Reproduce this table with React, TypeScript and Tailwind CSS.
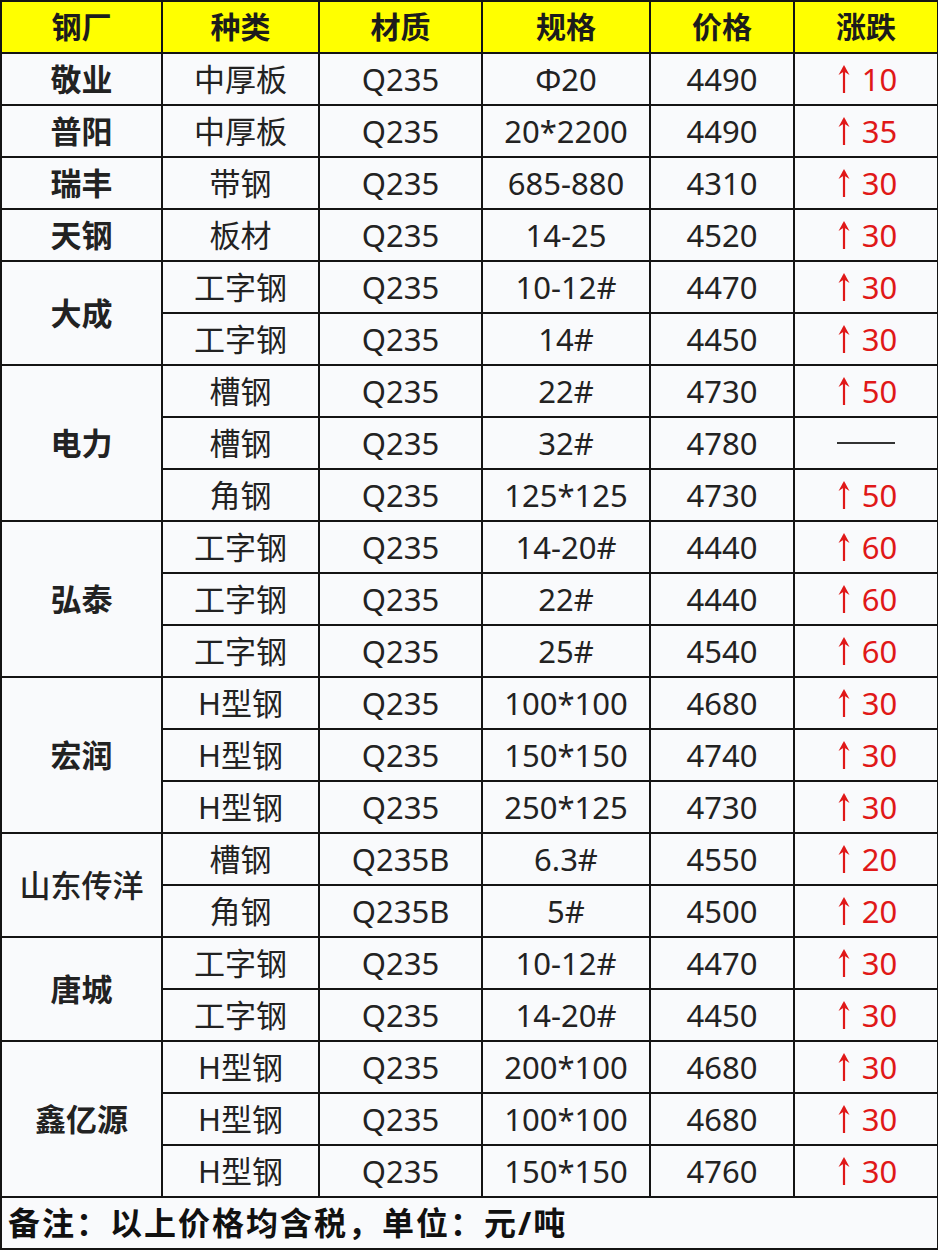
import React from "react";

type Row = { kind: string; mat: string; spec: string; price: string; chg: string | null };
type Group = { name: string; rows: Row[] };

const groups: Group[] = [
  { name: "敬业", rows: [{ kind: "中厚板", mat: "Q235", spec: "Φ20", price: "4490", chg: "10" }] },
  { name: "普阳", rows: [{ kind: "中厚板", mat: "Q235", spec: "20*2200", price: "4490", chg: "35" }] },
  { name: "瑞丰", rows: [{ kind: "带钢", mat: "Q235", spec: "685-880", price: "4310", chg: "30" }] },
  { name: "天钢", rows: [{ kind: "板材", mat: "Q235", spec: "14-25", price: "4520", chg: "30" }] },
  {
    name: "大成",
    rows: [
      { kind: "工字钢", mat: "Q235", spec: "10-12#", price: "4470", chg: "30" },
      { kind: "工字钢", mat: "Q235", spec: "14#", price: "4450", chg: "30" },
    ],
  },
  {
    name: "电力",
    rows: [
      { kind: "槽钢", mat: "Q235", spec: "22#", price: "4730", chg: "50" },
      { kind: "槽钢", mat: "Q235", spec: "32#", price: "4780", chg: null },
      { kind: "角钢", mat: "Q235", spec: "125*125", price: "4730", chg: "50" },
    ],
  },
  {
    name: "弘泰",
    rows: [
      { kind: "工字钢", mat: "Q235", spec: "14-20#", price: "4440", chg: "60" },
      { kind: "工字钢", mat: "Q235", spec: "22#", price: "4440", chg: "60" },
      { kind: "工字钢", mat: "Q235", spec: "25#", price: "4540", chg: "60" },
    ],
  },
  {
    name: "宏润",
    rows: [
      { kind: "H型钢", mat: "Q235", spec: "100*100", price: "4680", chg: "30" },
      { kind: "H型钢", mat: "Q235", spec: "150*150", price: "4740", chg: "30" },
      { kind: "H型钢", mat: "Q235", spec: "250*125", price: "4730", chg: "30" },
    ],
  },
  {
    name: "山东传洋",
    rows: [
      { kind: "槽钢", mat: "Q235B", spec: "6.3#", price: "4550", chg: "20" },
      { kind: "角钢", mat: "Q235B", spec: "5#", price: "4500", chg: "20" },
    ],
  },
  {
    name: "唐城",
    rows: [
      { kind: "工字钢", mat: "Q235", spec: "10-12#", price: "4470", chg: "30" },
      { kind: "工字钢", mat: "Q235", spec: "14-20#", price: "4450", chg: "30" },
    ],
  },
  {
    name: "鑫亿源",
    rows: [
      { kind: "H型钢", mat: "Q235", spec: "200*100", price: "4680", chg: "30" },
      { kind: "H型钢", mat: "Q235", spec: "100*100", price: "4680", chg: "30" },
      { kind: "H型钢", mat: "Q235", spec: "150*150", price: "4760", chg: "30" },
    ],
  },
];

const font = { fontFamily: '"Noto Sans", "Noto Sans CJK SC", sans-serif' };

function UpArrow() {
  return (
    <svg width="14" height="30" viewBox="0 0 14 30" className="inline-block">
      <path d="M7 3 V29" stroke="#e01818" strokeWidth="2.2" fill="none" />
      <path d="M7 1 L12.5 11 L7 7.5 L1.5 11 Z" fill="#e01818" />
    </svg>
  );
}

const cell = "border-2 border-[#141414] h-[52px] p-0 text-center align-middle";

export default function App() {
  return (
    <div className="w-[938px] h-[1250px] bg-white" style={font}>
      <table className="table-fixed border-collapse w-[937px] text-[#222]">
        <colgroup>
          <col className="w-[161px]" />
          <col className="w-[157px]" />
          <col className="w-[163px]" />
          <col className="w-[168px]" />
          <col className="w-[144px]" />
          <col className="w-[144px]" />
        </colgroup>
        <thead>
          <tr className="bg-[#ffff00]">
            {["钢厂", "种类", "材质", "规格", "价格", "涨跌"].map((h) => (
              <th key={h} className={`${cell} text-[30px] font-bold leading-none text-[#1c1c1c]`}>
                {h}
              </th>
            ))}
          </tr>
        </thead>
        <tbody className="bg-[#f9fafc]">
          {groups.map((g) =>
            g.rows.map((r, i) => (
              <tr key={g.name + i}>
                {i === 0 && (
                  <td
                    rowSpan={g.rows.length}
                    className={`${cell} text-[31px] leading-none ${g.name === "山东传洋" ? "font-medium" : "font-semibold"}`}
                  >
                    {g.name}
                  </td>
                )}
                <td className={`${cell} text-[31px] leading-none`}>{r.kind}</td>
                <td className={`${cell} text-[31px] leading-none`}>{r.mat}</td>
                <td className={`${cell} text-[31px] leading-none`}>{r.spec}</td>
                <td className={`${cell} text-[31px] leading-none`}>{r.price}</td>
                <td className={`${cell} text-[31px] leading-none`}>
                  {r.chg ? (
                    <div className="flex items-center justify-center gap-[11px] text-[#e01818] pl-[2px]">
                      <UpArrow />
                      <span>{r.chg}</span>
                    </div>
                  ) : (
                    <div className="flex items-center justify-center">
                      <div className="w-[58px] h-[2px] bg-[#333]" />
                    </div>
                  )}
                </td>
              </tr>
            ))
          )}
          <tr>
            <td colSpan={6} className="border-2 border-[#141414] h-[52px] p-0 pl-[6px] text-left align-middle text-[32px] font-bold leading-none tracking-[2px] text-[#111]">
              备注：以上价格均含税，单位：元/吨
            </td>
          </tr>
        </tbody>
      </table>
    </div>
  );
}
